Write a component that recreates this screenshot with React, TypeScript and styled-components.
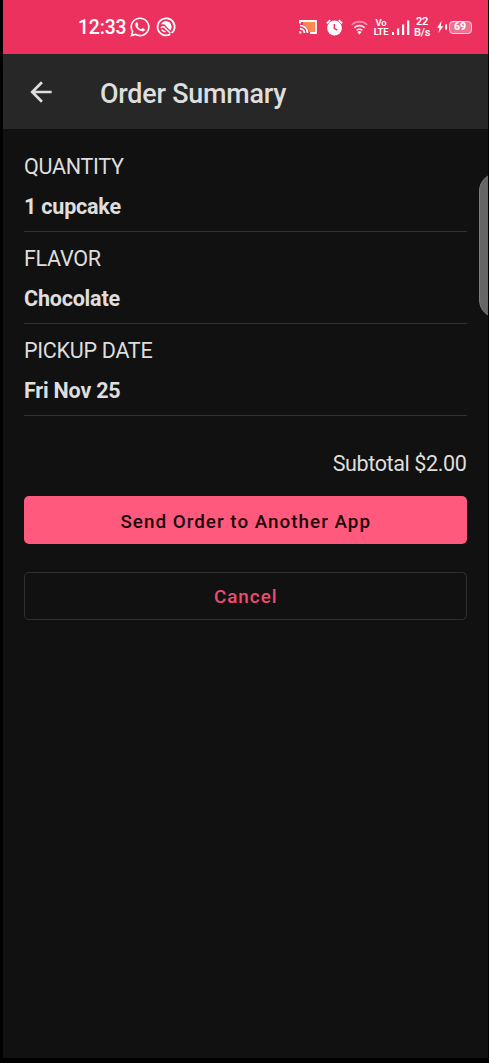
import React from "react";
import styled, { createGlobalStyle } from "styled-components";
import { FaWhatsapp } from "react-icons/fa";

const GlobalStyle = createGlobalStyle`
  * { box-sizing: border-box; }
  body { margin: 0; background: #000; font-family: Roboto, "Liberation Sans", sans-serif; }
`;

const Screen = styled.div`
  width: 489px;
  height: 1063px;
  padding: 0 1px 5px 3px;
  background: #000;
  overflow: hidden;
`;

const Phone = styled.div`
  position: relative;
  height: 100%;
  background: #111;
  color: #dedede;
  overflow: hidden;
`;

const StatusBar = styled.header`
  display: flex;
  align-items: center;
  height: 54px;
  padding: 0 16.5px 0 75px;
  background: #ed315f;
  color: #fff;
`;

const Clock = styled.span`
  width: 51px;
  font-size: 19.3px;
  font-weight: 500;
  line-height: 24px;
  letter-spacing: -0.1px;
  padding-top: 2px;
`;

const Glyph = styled.svg<{ $gap?: number }>`
  flex: none;
  display: block;
  margin-left: ${(p) => p.$gap ?? 0}px;
`;

const Spacer = styled.div`
  flex: 1;
`;

const Stacked = styled.span<{ $size: number; $gap: number; $width: number; $line: number }>`
  flex: none;
  display: flex;
  flex-direction: column;
  align-items: center;
  width: ${(p) => p.$width}px;
  margin-left: ${(p) => p.$gap}px;
  font-size: ${(p) => p.$size}px;
  line-height: ${(p) => p.$line}px;
  font-weight: 600;
  letter-spacing: -0.2px;
  white-space: nowrap;
`;

const Battery = styled.span`
  display: flex;
  align-items: center;
  justify-content: center;
  width: 23px;
  height: 13px;
  margin-left: 1px;
  border: 1.5px solid #ffd9e2;
  border-radius: 4px;
  background: #f16f8f;
  font-size: 10.5px;
  font-weight: 800;
  line-height: 10px;
`;

const AppBar = styled.div`
  display: flex;
  align-items: center;
  height: 75px;
  padding-left: 21.5px;
  background: #272727;
`;

const Title = styled.h1`
  margin: 4px 0 0 43.5px;
  font-size: 26.9px;
  font-weight: 500;
  line-height: 32px;
  letter-spacing: -0.22px;
`;

const Content = styled.main`
  display: flex;
  flex-direction: column;
  padding: 11px 21.5px 0 21px;
`;

const Row = styled.section`
  display: flex;
  flex-direction: column;
  gap: 14px;
  height: 92px;
  padding-top: 14px;
  border-bottom: 1px solid #303030;
`;

const Label = styled.span`
  font-size: 21.56px;
  line-height: 26px;
  letter-spacing: -0.3px;
`;

const Value = styled(Label)`
  font-weight: 700;
  letter-spacing: -0.22px;
`;

const Subtotal = styled(Label)`
  margin-top: 35px;
  align-self: flex-end;
  letter-spacing: -0.4px;
`;

const Button = styled.button<{ $filled?: boolean }>`
  height: 48px;
  margin-top: ${(p) => (p.$filled ? 19 : 28)}px;
  padding: ${(p) => (p.$filled ? 3 : 2)}px 0 0 1px;
  border: ${(p) => (p.$filled ? "0" : "1px solid #303030")};
  border-radius: 5px;
  background: ${(p) => (p.$filled ? "#ff5a7d" : "transparent")};
  color: ${(p) => (p.$filled ? "#1c070c" : "#ed4c70")};
  font: 500 18.86px/24px Roboto, "Liberation Sans", sans-serif;
  letter-spacing: 1px;
`;

const EdgeHandle = styled.div`
  position: absolute;
  top: 173px;
  right: -27px;
  width: 36px;
  height: 145px;
  border: 1px solid #7c7c7c;
  border-radius: 18px;
  background: #666;
`;

const details = [
  ["QUANTITY", "1 cupcake"],
  ["FLAVOR", "Chocolate"],
  ["PICKUP DATE", "Fri Nov 25"],
];

const BlockedIcon = () => (
  <Glyph $gap={5} width="20" height="20" viewBox="0 0 20 20" fill="none" stroke="#fff">
    <path d="M14.2 17.3A8.5 8.5 0 1 1 17.6 13.8L15.8 15.8" strokeWidth="1.8" />
    <path d="M5 7.2A5.6 5.6 0 0 1 15.4 11.2L14.4 13.4 8.2 7.2z" fill="#fff" stroke="none" />
    <path d="M5 11Q7 8.6 9 11L14.4 16.2M5.6 12.6Q7 14.6 9.6 14.8" strokeWidth="1.5" />
  </Glyph>
);

const CastIcon = () => (
  <Glyph width="18" height="14" viewBox="0 0 18 14" fill="none" stroke="#fff">
    <path d="M4 2h12v10h-6C9 8 7 6 4 5z" fill="#ff8a50" stroke="none" />
    <path d="M1 3.5V1h16v12h-6" strokeWidth="1.8" />
    <path d="M1 5.5A7.5 7.5 0 0 1 8.5 13M1 8.6A4.4 4.4 0 0 1 5.4 13" strokeWidth="1.7" />
    <path d="M.3 11a2.4 2.4 0 0 1 2.4 2.4H.3z" fill="#fff" stroke="none" />
  </Glyph>
);

const AlarmIcon = () => (
  <Glyph $gap={9.5} width="17" height="17" viewBox="0 0 17 17" fill="none">
    <circle cx="8.5" cy="9" r="7.4" fill="#fff" />
    <path d="M.8 4.4 4.2 1.2M16.2 4.4l-3.4-3.2" stroke="#fff" strokeWidth="1.8" />
    <path d="M8.3 5v4.4l3 1.8" stroke="#ed315f" strokeWidth="1.4" />
  </Glyph>
);

const WifiIcon = () => (
  <Glyph $gap={7.5} width="17" height="15" viewBox="0 0 17 15" fill="none" stroke="#fff" strokeWidth="1.6">
    <path d="M.8 4.8a11 11 0 0 1 15.4 0" opacity=".45" />
    <path d="M3.3 7.8a7.4 7.4 0 0 1 10.4 0" opacity=".85" />
    <path d="M5.7 10.4a4 4 0 0 1 5.6 0" />
    <path d="M6.5 12a2.8 2.8 0 0 1 4 0l-2 2.4z" fill="#fff" stroke="none" />
  </Glyph>
);

const SignalIcon = () => (
  <Glyph $gap={4} width="18" height="15" viewBox="0 0 18 15" fill="#fff">
    <rect x="0" y="12" width="2" height="3" />
    <rect x="5" y="8.5" width="2.2" height="6.5" />
    <rect x="10" y="4.5" width="2.2" height="10.5" />
    <rect x="15" y="0.5" width="2.3" height="14.5" />
  </Glyph>
);

const ChargeIcon = () => (
  <Glyph $gap={6.5} width="11" height="12" viewBox="0 0 11 12" fill="#fff">
    <path d="M4.5 0 0 6.7h2.5L1.4 12 6.4 5.2H3.8z" />
    <rect x="8.2" y="3.2" width="1.9" height="5.6" rx=".7" />
  </Glyph>
);

export default function App() {
  return (
    <>
      <GlobalStyle />
      <Screen>
        <Phone>
          <StatusBar>
            <Clock>12:33</Clock>
            <FaWhatsapp size={22} />
            <BlockedIcon />
            <Spacer />
            <CastIcon />
            <AlarmIcon />
            <WifiIcon />
            <Stacked $size={9.5} $line={9} $gap={6.5} $width={14}>
              <span>Vo</span>
              <span>LTE</span>
            </Stacked>
            <SignalIcon />
            <Stacked $size={11} $line={11} $gap={4} $width={16}>
              <span>22</span>
              <span>B/s</span>
            </Stacked>
            <ChargeIcon />
            <Battery>69</Battery>
          </StatusBar>
          <AppBar>
            <svg width="32" height="32" viewBox="0 0 24 24" fill="#dedede">
              <path d="M20 11H7.83l5.59-5.59L12 4l-8 8 8 8 1.41-1.41L7.83 13H20v-2z" />
            </svg>
            <Title>Order Summary</Title>
          </AppBar>
          <Content>
            {details.map(([label, value]) => (
              <Row key={label}>
                <Label>{label}</Label>
                <Value>{value}</Value>
              </Row>
            ))}
            <Subtotal>Subtotal $2.00</Subtotal>
            <Button $filled>Send Order to Another App</Button>
            <Button>Cancel</Button>
          </Content>
          <EdgeHandle />
        </Phone>
      </Screen>
    </>
  );
}
